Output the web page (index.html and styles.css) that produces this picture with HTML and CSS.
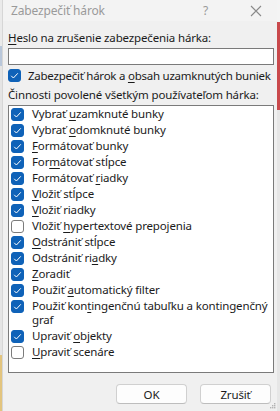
FILE: index.html
```html
<!DOCTYPE html>
<html lang="sk">
<head>
<meta charset="utf-8">
<title>Zabezpečiť hárok</title>
<link rel="stylesheet" href="styles.css">
</head>
<body>
<div class="screen">
  <div class="strip strip-left"></div>
  <div class="dialog">
    <div class="titlebar">
      <span class="title">Zabezpečiť hárok</span>
      <span class="help">?</span>
      <svg class="close" width="12" height="12" viewBox="0 0 12 12"><path d="M1 1 L11 11 M11 1 L1 11" stroke="#8a8a8a" stroke-width="1.1" fill="none"/></svg>
    </div>
    <div class="body">
      <div class="label"><u>H</u>eslo na zrušenie zabezpečenia hárka:</div>
      <div class="input"></div>
      <div class="row top-check">
        <span class="cb on"><svg viewBox="0 0 13 13"><path d="M3.2 6.8 L5.4 9 L9.8 4.3" stroke="#fff" stroke-width="1" fill="none"/></svg></span>
        <span class="nowrap">Zabezpečiť hárok a <u>o</u>bsah uzamknutých buniek</span>
      </div>
      <div class="label label2">Činnosti povolené všetkým používateľom hárka:</div>
      <div class="list">
        <div class="item"><span class="cb on"><svg viewBox="0 0 13 13"><path d="M3.2 6.8 L5.4 9 L9.8 4.3" stroke="#fff" stroke-width="1" fill="none"/></svg></span><span>Vybrať <u>u</u>zamknuté bunky</span></div>
        <div class="item"><span class="cb on"><svg viewBox="0 0 13 13"><path d="M3.2 6.8 L5.4 9 L9.8 4.3" stroke="#fff" stroke-width="1" fill="none"/></svg></span><span>Vybrať <u>o</u>domknuté bunky</span></div>
        <div class="item"><span class="cb on"><svg viewBox="0 0 13 13"><path d="M3.2 6.8 L5.4 9 L9.8 4.3" stroke="#fff" stroke-width="1" fill="none"/></svg></span><span><u>F</u>ormátovať bunky</span></div>
        <div class="item"><span class="cb on"><svg viewBox="0 0 13 13"><path d="M3.2 6.8 L5.4 9 L9.8 4.3" stroke="#fff" stroke-width="1" fill="none"/></svg></span><span>For<u>m</u>átovať stĺpce</span></div>
        <div class="item"><span class="cb on"><svg viewBox="0 0 13 13"><path d="M3.2 6.8 L5.4 9 L9.8 4.3" stroke="#fff" stroke-width="1" fill="none"/></svg></span><span>Formátovať <u>r</u>iadky</span></div>
        <div class="item"><span class="cb on"><svg viewBox="0 0 13 13"><path d="M3.2 6.8 L5.4 9 L9.8 4.3" stroke="#fff" stroke-width="1" fill="none"/></svg></span><span><u>V</u>ložiť stĺpce</span></div>
        <div class="item"><span class="cb on"><svg viewBox="0 0 13 13"><path d="M3.2 6.8 L5.4 9 L9.8 4.3" stroke="#fff" stroke-width="1" fill="none"/></svg></span><span><u>V</u>ložiť riadky</span></div>
        <div class="item"><span class="cb"></span><span>Vložiť <u>h</u>ypertextové prepojenia</span></div>
        <div class="item"><span class="cb on"><svg viewBox="0 0 13 13"><path d="M3.2 6.8 L5.4 9 L9.8 4.3" stroke="#fff" stroke-width="1" fill="none"/></svg></span><span><u>O</u>dstrániť stĺpce</span></div>
        <div class="item"><span class="cb on"><svg viewBox="0 0 13 13"><path d="M3.2 6.8 L5.4 9 L9.8 4.3" stroke="#fff" stroke-width="1" fill="none"/></svg></span><span>Odstrániť ri<u>a</u>dky</span></div>
        <div class="item"><span class="cb on"><svg viewBox="0 0 13 13"><path d="M3.2 6.8 L5.4 9 L9.8 4.3" stroke="#fff" stroke-width="1" fill="none"/></svg></span><span><u>Z</u>oradiť</span></div>
        <div class="item"><span class="cb on"><svg viewBox="0 0 13 13"><path d="M3.2 6.8 L5.4 9 L9.8 4.3" stroke="#fff" stroke-width="1" fill="none"/></svg></span><span>Použiť <u>a</u>utomatický filter</span></div>
        <div class="item"><span class="cb on"><svg viewBox="0 0 13 13"><path d="M3.2 6.8 L5.4 9 L9.8 4.3" stroke="#fff" stroke-width="1" fill="none"/></svg></span><span>Použiť kon<u>t</u>ingenčnú tabuľku a kontingenčný graf</span></div>
        <div class="item"><span class="cb on"><svg viewBox="0 0 13 13"><path d="M3.2 6.8 L5.4 9 L9.8 4.3" stroke="#fff" stroke-width="1" fill="none"/></svg></span><span>Upraviť <u>o</u>bjekty</span></div>
        <div class="item"><span class="cb"></span><span><u>U</u>praviť scenáre</span></div>
      </div>
      <div class="buttons">
        <button class="btn">OK</button>
        <button class="btn">Zrušiť</button>
      </div>
    </div>
    <svg class="grip" width="6" height="6" viewBox="0 0 6 6"><g fill="#b4b4b4"><rect x="4" y="0" width="1.4" height="1.4"/><rect x="2" y="2" width="1.4" height="1.4"/><rect x="4" y="2" width="1.4" height="1.4"/><rect x="0" y="4" width="1.4" height="1.4"/><rect x="2" y="4" width="1.4" height="1.4"/><rect x="4" y="4" width="1.4" height="1.4"/></g></svg>
  </div>
  <div class="strip strip-right"></div>
</div>
</body>
</html>
```

FILE: styles.css
```css
* { box-sizing: border-box; }
html, body { margin: 0; padding: 0; }
body {
  width: 280px;
  height: 411px;
  overflow: hidden;
  font-family: "Noto Sans", "Open Sans", sans-serif;
  font-size: 11.5px;
  letter-spacing: -0.15px;
  color: #1b1b1b;
  background: #f0f0f0;
}
.screen {
  display: flex;
  height: 411px;
}
.strip-left {
  width: 2px;
  background: linear-gradient(to bottom, #eaeaea 0, #eaeaea 46px, #b9c7da 46px, #b9c7da 66px, #e4e4e4 66px, #e4e4e4 355px, #e2c47e 355px, #e2c47e 100%);
}
.strip-right {
  width: 3px;
  background: linear-gradient(to bottom, #f4f4f4 0, #f4f4f4 22px, #c9494c 22px, #c9494c 110px, #e6e6e6 110px, #e6e6e6 100%);
}
.dialog {
  position: relative;
  width: 275px;
  height: 411px;
  background: #f0f0f0;
  border-left: 1px solid #d6d6d6;
}
.titlebar {
  height: 21px;
  background: #f3f3f3;
  display: flex;
  align-items: center;
  padding-left: 8px;
}
.title {
  color: #9a9a9a;
  flex: 1;
  line-height: 16px;
  font-size: 12px;
}
.help {
  color: #9a9a9a;
  width: 14px;
  margin-right: 33px;
  font-size: 12px;
}
.close {
  margin-right: 15px;
}
.body {
  padding: 9px 3px 0 5px;
}
.label {
  line-height: 16px;
  height: 16px;
  white-space: nowrap;
}
.nowrap { white-space: nowrap; letter-spacing: -0.25px; }
u { text-underline-offset: 2px; text-decoration-thickness: 1px; }
.input {
  margin-top: 2px;
  height: 17px;
  background: #fff;
  border: 1px solid #7a7a7a;
}
.row {
  display: flex;
  align-items: center;
  gap: 7px;
}
.top-check {
  margin-top: 2px;
  height: 16px;
}
.label2 {
  margin-top: 4px;
}
.cb {
  flex: none;
  width: 13px;
  height: 13px;
  border-radius: 3px;
  background: #fff;
  border: 1px solid #7c7c7c;
  display: flex;
}
.cb.on {
  background: #0f62b8;
  border-color: #0f62b8;
}
.cb svg { width: 13px; height: 13px; margin: -1px; }
.list {
  margin-top: 2px;
  height: 268px;
  background: #fff;
  border: 1px solid #7a7a7a;
  padding: 0 4px 0 2px;
}
.item {
  display: flex;
  align-items: flex-start;
  gap: 8px;
  padding: 1px 0;
  line-height: 14px;
}
.item .cb { margin-top: 1px; }
.buttons {
  display: flex;
  justify-content: flex-end;
  gap: 13px;
  margin-top: 11px;
  padding-right: 3px;
}
.btn {
  width: 71px;
  height: 20px;
  font-family: inherit;
  font-size: 11.5px;
  letter-spacing: -0.15px;
  color: #1b1b1b;
  background: #fdfdfd;
  border: 1px solid #d0d0d0;
  border-bottom-color: #bdbdbd;
  border-radius: 4px;
  padding: 0;
}
.grip {
  position: absolute;
  right: 1px;
  bottom: 2px;
}
```
